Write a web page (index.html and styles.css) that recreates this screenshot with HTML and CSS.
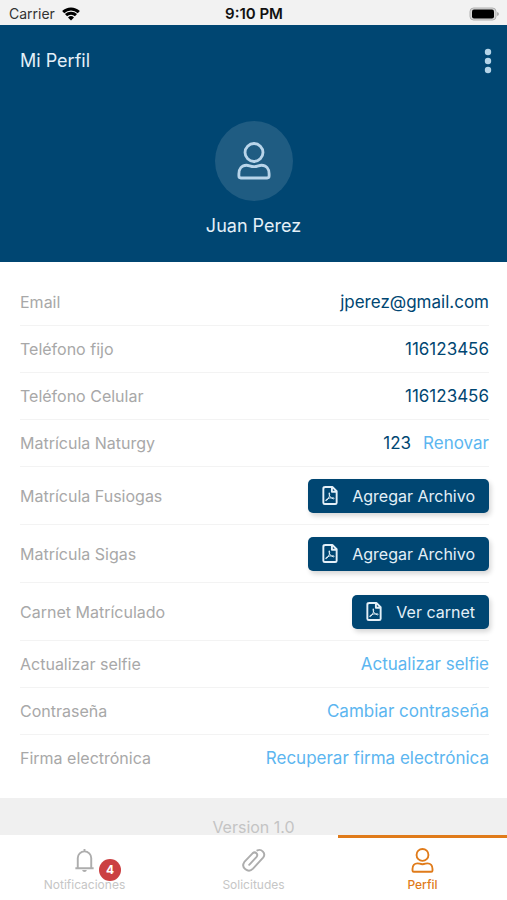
FILE: index.html
```html
<!DOCTYPE html>
<html lang="es">
<head>
<meta charset="utf-8">
<meta name="viewport" content="width=device-width, initial-scale=1">
<title>Mi Perfil</title>
<link rel="stylesheet" href="styles.css">
</head>
<body>
<svg class="defs" aria-hidden="true">
  <symbol id="person" viewBox="0 0 36 40">
    <circle cx="18" cy="11" r="9.5"/>
    <path d="M10 24.5C13 24.5 14 26 18 26s5-1.500 8-1.500c5 0 8 4 8 9v2.500q0 2-2 2H4q-2 0-2-2V33.500c0-5 3-9 8-9z"/>
  </symbol>
  <symbol id="pdf" viewBox="0 0 16 20">
    <path d="M3 1h7.500L15 5.500V17.500q0 1.500-1.500 1.500H2.500Q1 19 1 17.500V2.500Q1 1 3 1zM10 1v5h5"/>
    <path class="thin" d="M7.300 7.200c1 2-.3 5.800-3 8.200-.8.500-1.300-.3-.5-1 2-1.500 5-2.300 8-1.900 1 .3.700 1.200-.3 1C9 13 6.800 10.500 7 7.800q0-.9.300-.6z"/>
  </symbol>
</svg>
<div class="status">
  <div class="carrier">
    <span>Carrier</span>
    <svg class="wifi" viewBox="0 0 18 14" aria-hidden="true">
      <path d="M1.200 5.200a11.200 11.200 0 0 1 15.600 0M4 8.200a7.200 7.200 0 0 1 10 0"/>
      <path class="dot" d="M9 13.500 6 10.500a4.300 4.300 0 0 1 6 0z"/>
    </svg>
  </div>
  <strong>9:10 PM</strong>
  <svg class="battery" viewBox="0 0 30 14" aria-hidden="true">
    <rect class="shell" x="1" y="1" width="26" height="12" rx="3.500"/>
    <rect x="3" y="2.500" width="22" height="9" rx="2"/>
    <path class="tip" d="M28 5q2 .5 2 2t-2 2z"/>
  </svg>
</div>
<header class="hero">
  <div class="bar">
    <h1>Mi Perfil</h1>
    <button class="more" type="button" aria-label="Más opciones">
      <svg viewBox="0 0 8 26" aria-hidden="true"><circle cx="4" cy="4" r="3.200"/><circle cx="4" cy="13" r="3.200"/><circle cx="4" cy="22" r="3.200"/></svg>
    </button>
  </div>
  <div class="avatar"><svg aria-hidden="true"><use href="#person"/></svg></div>
  <p class="name">Juan Perez</p>
</header>
<main>
  <dl class="fields">
    <div class="row"><dt>Email</dt><dd>jperez@gmail.com</dd></div>
    <div class="row"><dt>Teléfono fijo</dt><dd>116123456</dd></div>
    <div class="row"><dt>Teléfono Celular</dt><dd>116123456</dd></div>
    <div class="row"><dt>Matrícula Naturgy</dt><dd>123 <a href="#renovar">Renovar</a></dd></div>
    <div class="row tall"><dt>Matrícula Fusiogas</dt><dd><button class="file" type="button"><svg aria-hidden="true"><use href="#pdf"/></svg>Agregar Archivo</button></dd></div>
    <div class="row tall"><dt>Matrícula Sigas</dt><dd><button class="file" type="button"><svg aria-hidden="true"><use href="#pdf"/></svg>Agregar Archivo</button></dd></div>
    <div class="row tall"><dt>Carnet Matrículado</dt><dd><button class="file" type="button"><svg aria-hidden="true"><use href="#pdf"/></svg>Ver carnet</button></dd></div>
    <div class="row"><dt>Actualizar selfie</dt><dd><a href="#selfie">Actualizar selfie</a></dd></div>
    <div class="row"><dt>Contraseña</dt><dd><a href="#contrasena">Cambiar contraseña</a></dd></div>
    <div class="row"><dt>Firma electrónica</dt><dd><a href="#firma">Recuperar firma electrónica</a></dd></div>
  </dl>
</main>
<footer class="version">Version 1.0</footer>
<nav class="tabs">
  <a class="tab" href="#notificaciones">
    <span class="icon">
      <svg viewBox="0 0 22 26" aria-hidden="true"><path d="M11 1v2M1.500 21h19M4 21V10.500a7 7 0 0 1 14 0V21"/><path class="solid" d="M8.500 23h5q-.5 2-2.500 2t-2.500-2z"/></svg>
      <span class="badge">4</span>
    </span>
    Notificaciones
  </a>
  <a class="tab" href="#solicitudes">
    <span class="icon">
      <svg class="clip" viewBox="0 0 26 26" aria-hidden="true"><path d="M17 2.500c4-2 9.500 3 6 7.500L12.500 21.500c-5 5-13-1-9-7L12 5.500c3-2.500 6.500 1 4 4L8.500 17.500"/></svg>
    </span>
    Solicitudes
  </a>
  <a class="tab active" href="#perfil" aria-current="page">
    <span class="icon"><svg aria-hidden="true"><use href="#person"/></svg></span>
    Perfil
  </a>
</nav>
</body>
</html>
```
FILE: styles.css
```css
* { box-sizing: border-box; }

body {
  margin: 0;
  min-height: 100vh;
  display: flex;
  flex-direction: column;
  background: #fff;
  color: #004672;
  font-family: Inter, "Liberation Sans", sans-serif;
  font-size: 16px;
  line-height: 20px;
}

h1, p, dl, dd { margin: 0; }
a { color: #5cb6f0; text-decoration: none; }
button { font: inherit; border: 0; cursor: pointer; }
svg { display: block; fill: none; stroke: currentColor; stroke-linejoin: round; }
.defs { position: absolute; width: 0; height: 0; }

.status {
  display: grid;
  grid-template-columns: 1fr auto 1fr;
  align-items: center;
  height: 25px;
  padding: 2px 8px 0 9px;
  background: #f2f2f2;
  color: #111;
  font-size: 14px;
}
.status strong { font-size: 15px; font-weight: 600; }
.carrier { display: flex; align-items: center; gap: 7px; color: #333; }
.wifi { width: 18px; height: 14px; color: #000; stroke-width: 3; }
.wifi .dot { fill: #000; stroke: none; }
.battery { width: 30px; height: 14px; justify-self: end; fill: #000; stroke: none; }
.battery .shell { fill: #d8d8d8; stroke: #b0b0b0; }
.battery .tip { fill: #b0b0b0; }

.hero {
  display: flex;
  flex-direction: column;
  align-items: center;
  height: 237px;
  background: #004672;
  color: #e4f0f8;
}
.bar {
  align-self: stretch;
  display: flex;
  justify-content: space-between;
  align-items: center;
  height: 72px;
  padding: 0 14px 0 20px;
}
h1 { font-size: 18px; font-weight: 400; }
.more { padding: 0 1px 0 0; background: none; color: #b4d4e8; }
.more svg { width: 8px; height: 26px; fill: currentColor; stroke: none; }
.avatar {
  display: grid;
  place-items: center;
  width: 78px;
  height: 80px;
  margin-top: 24px;
  border-radius: 50%;
  background: #1f5c82;
  color: #b9d5ea;
}
.avatar svg { width: 34px; height: 38px; stroke-width: 3; }
.name { margin-top: 15px; font-size: 18px; }

.fields { padding: 17px 18px 16px 20px; }
.row {
  display: flex;
  justify-content: space-between;
  align-items: center;
  height: 47px;
  border-bottom: 1px solid #f3f3f3;
}
.row.tall { height: 58px; }
.row:last-child { border-bottom-color: transparent; }
dt { color: #a8a8a8; }
dd { display: flex; gap: 12px; font-size: 17px; }
.file {
  display: flex;
  align-items: center;
  gap: 14px;
  height: 34px;
  padding: 0 14px;
  border-radius: 5px;
  background: #004672;
  color: #e4f0f8;
  font-size: 16px;
  box-shadow: 2px 3px 5px rgba(0, 0, 0, 0.16);
}
.file svg { width: 16px; height: 19px; stroke-width: 2; }
.thin { stroke-width: 1; }

.version {
  flex: 1;
  padding: 19px 0 63px;
  background: #f0f0f0;
  color: #c4c4c4;
  text-align: center;
}

.tabs {
  position: fixed;
  right: 0;
  bottom: 0;
  left: 0;
  display: grid;
  grid-template-columns: repeat(3, 1fr);
  background: #fff;
}
.tab {
  display: flex;
  flex-direction: column;
  align-items: center;
  gap: 4px;
  height: 65px;
  border-top: 3px solid #fff;
  padding-top: 10px;
  color: #c6c6c6;
  font-size: 12px;
  line-height: 16px;
}
.tab.active { border-color: #e07b1a; color: #e07b1a; font-weight: 500; }
.icon { position: relative; color: #adadad; }
.icon svg { width: 25px; height: 25px; stroke-width: 2; }
.icon .clip { stroke-linecap: round; }
.icon .solid { fill: currentColor; stroke: none; }
.active .icon { color: inherit; }
.active .icon svg { stroke-width: 3; }
.badge {
  position: absolute;
  top: 11px;
  left: 27px;
  width: 22px;
  height: 22px;
  border-radius: 50%;
  background: #cb4042;
  color: #fff;
  font-weight: 700;
  line-height: 22px;
  text-align: center;
}
```
